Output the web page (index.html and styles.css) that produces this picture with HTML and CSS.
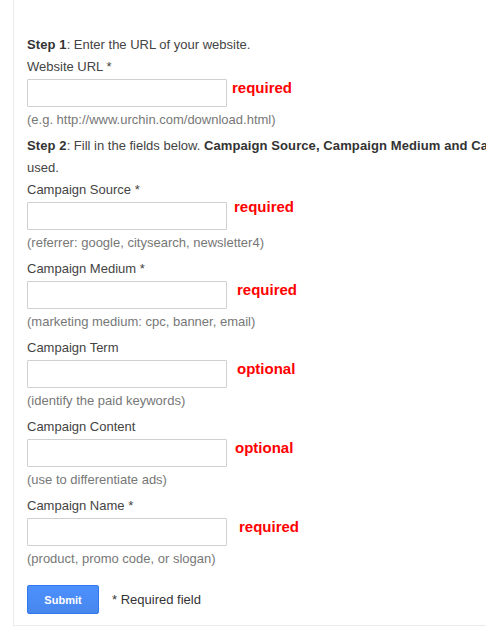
FILE: index.html
```html
<!DOCTYPE html>
<html lang="en">
<head>
  <meta charset="UTF-8">
  <title>URL Builder</title>
  <link rel="stylesheet" href="styles.css">
</head>
<body>

  <div id="painel">
    <form id="construtor" onsubmit="return false;">

      <p class="passo"><b>Step 1</b>: Enter the URL of your website.</p>
      <div class="campo">
        <label for="url">Website URL *</label>
        <div class="linha">
          <input type="text" id="url">
          <span class="nota">required</span>
        </div>
        <div class="dica">(e.g. http://www.urchin.com/download.html)</div>
      </div>

      <p class="passo"><b>Step 2</b>: Fill in the fields below. <b>Campaign Source, Campaign Medium and Campaign Name</b> should always be used.</p>

      <div class="campo">
        <label for="source">Campaign Source *</label>
        <div class="linha">
          <input type="text" id="source">
          <span class="nota">required</span>
        </div>
        <div class="dica">(referrer: google, citysearch, newsletter4)</div>
      </div>

      <div class="campo">
        <label for="medium">Campaign Medium *</label>
        <div class="linha">
          <input type="text" id="medium">
          <span class="nota">required</span>
        </div>
        <div class="dica">(marketing medium: cpc, banner, email)</div>
      </div>

      <div class="campo">
        <label for="term">Campaign Term</label>
        <div class="linha">
          <input type="text" id="term">
          <span class="nota">optional</span>
        </div>
        <div class="dica">(identify the paid keywords)</div>
      </div>

      <div class="campo">
        <label for="content">Campaign Content</label>
        <div class="linha">
          <input type="text" id="content">
          <span class="nota">optional</span>
        </div>
        <div class="dica">(use to differentiate ads)</div>
      </div>

      <div class="campo">
        <label for="name">Campaign Name *</label>
        <div class="linha">
          <input type="text" id="name">
          <span class="nota">required</span>
        </div>
        <div class="dica">(product, promo code, or slogan)</div>
      </div>

      <div id="rodape">
        <button type="submit">Submit</button>
        <span>* Required field</span>
      </div>

    </form>
  </div>

</body>
</html>
```

FILE: styles.css
```css
html, body {
  overflow: hidden;
}

body {
  margin: 0;
  padding: 0 0 0 13px;
  background: #fff;
  font-family: Arial, "Liberation Sans", sans-serif;
  font-size: 13px;
  line-height: 22px;
  color: #444;
}

#painel {
  width: 680px;
  padding: 34px 13px 11px 13px;
  border-left: 1px solid #ebebeb;
  border-bottom: 1px solid #ebebeb;
}

.passo {
  margin: 0;
}

.passo b {
  color: #333;
  letter-spacing: 0.1px;
}

.campo {
  margin-bottom: 4px;
}

.campo label {
  display: block;
}

.linha {
  display: flex;
  align-items: flex-start;
  margin: 1px 0 2px;
}

.linha input {
  width: 200px;
  height: 28px;
  box-sizing: border-box;
  margin: 0;
  border: 1px solid #d0d0d0;
  border-radius: 1px;
  padding: 0 6px;
  font-size: 13px;
}

.nota {
  margin-left: 5px;
  margin-top: -2px;
  font-size: 15px;
  font-weight: bold;
  color: #f00;
}

.campo:nth-of-type(2) .nota { margin-left: 7px; margin-top: -6px; }
.campo:nth-of-type(3) .nota { margin-left: 10px; margin-top: -2px; }
.campo:nth-of-type(4) .nota { margin-left: 10px; margin-top: -2px; }
.campo:nth-of-type(5) .nota { margin-left: 8px; margin-top: -2px; }
.campo:nth-of-type(6) .nota { margin-left: 12px; margin-top: -2px; }

.dica {
  color: #777;
}

#rodape {
  display: flex;
  align-items: center;
  gap: 13px;
  margin-top: 15px;
  color: #333;
}

#rodape button {
  width: 72px;
  height: 29px;
  border: 1px solid #3079ed;
  border-radius: 2px;
  background: linear-gradient(#4d90fe, #4787ed);
  color: #fff;
  font-family: Arial, "Liberation Sans", sans-serif;
  font-size: 11px;
  font-weight: bold;
  cursor: pointer;
}
```
